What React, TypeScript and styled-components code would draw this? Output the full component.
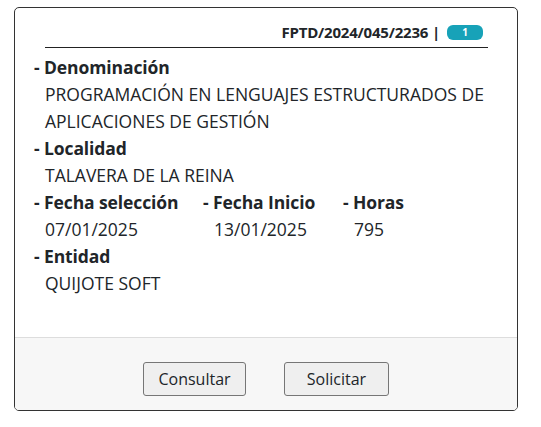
import React from 'react'
import styled, { createGlobalStyle } from 'styled-components'

const GlobalStyle = createGlobalStyle`
  html, body {
    margin: 0;
    padding: 0;
    background: #fff;
  }
  body {
    font-family: 'Open Sans', 'Noto Sans', sans-serif;
    color: #212529;
  }
`

const Page = styled.div`
  padding: 7px 0 0 14px;
`

const Card = styled.div`
  box-sizing: border-box;
  width: 504px;
  height: 404px;
  border: 1px solid #333;
  border-radius: 5px;
  display: flex;
  flex-direction: column;
  overflow: hidden;
`

const Body = styled.div`
  flex: 1;
  padding: 0 29px 0 19px;
`

const Header = styled.div`
  display: flex;
  justify-content: flex-end;
  align-items: center;
  gap: 7px;
  margin-left: 11px;
  padding: 14px 5px 5px 0;
  border-bottom: 1px solid #222;
  font-size: 15px;
  font-weight: 700;
  letter-spacing: -0.2px;
`

const Badge = styled.span`
  display: inline-block;
  background: #17a2b8;
  color: #fff;
  font-size: 10px;
  font-weight: 700;
  line-height: 15px;
  width: 36px;
  text-align: center;
  border-radius: 6px;
`

const Fields = styled.div`
  padding-top: 6px;
  font-size: 17.5px;
  line-height: 27px;
`

const Label = styled.div`
  font-weight: 700;
  letter-spacing: -0.1px;
`

const Value = styled.div`
  padding-left: 11px;
`

const Row = styled.div`
  display: grid;
  grid-template-columns: 169px 140px auto;
`

const Footer = styled.div`
  height: 73px;
  box-sizing: border-box;
  border-top: 1px solid #ddd;
  background: #f7f7f7;
  display: flex;
  justify-content: center;
  align-items: flex-start;
  gap: 38px;
  padding-top: 24px;
`

const Button = styled.button<{ $w: number }>`
  width: ${(p) => p.$w}px;
  height: 34px;
  background: #efefef;
  border: 1px solid #767676;
  border-radius: 3px;
  font-family: 'Open Sans', 'Noto Sans', sans-serif;
  font-size: 16px;
  color: #212529;
  padding: 0;
`

const Field: React.FC<{ label: string; children: React.ReactNode }> = ({ label, children }) => (
  <div>
    <Label>- {label}</Label>
    <Value>{children}</Value>
  </div>
)

export default function App() {
  return (
    <>
      <GlobalStyle />
      <Page>
        <Card>
          <Body>
            <Header>
              <span>FPTD/2024/045/2236 |</span>
              <Badge>1</Badge>
            </Header>
            <Fields>
              <Field label="Denominación">
                PROGRAMACIÓN EN LENGUAJES ESTRUCTURADOS DE
                <br />
                APLICACIONES DE GESTIÓN
              </Field>
              <Field label="Localidad">TALAVERA DE LA REINA</Field>
              <Row>
                <Field label="Fecha selección">07/01/2025</Field>
                <Field label="Fecha Inicio">13/01/2025</Field>
                <Field label="Horas">795</Field>
              </Row>
              <Field label="Entidad">QUIJOTE SOFT</Field>
            </Fields>
          </Body>
          <Footer>
            <Button $w={103}>Consultar</Button>
            <Button $w={105}>Solicitar</Button>
          </Footer>
        </Card>
      </Page>
    </>
  )
}
